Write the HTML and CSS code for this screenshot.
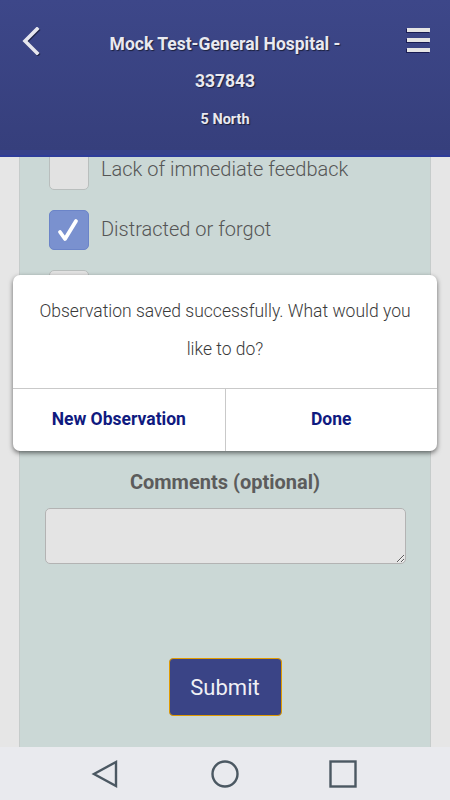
FILE: index.html
```html
<!DOCTYPE html>
<html>
<head>
<meta charset="utf-8">
<link rel="stylesheet" href="styles.css">
</head>
<body>
<div class="screen">
  <header class="topbar">
    <div class="topbar-main">
      <div class="back">
        <svg width="20" height="28" viewBox="0 0 20 28"><path d="M16 2 L4 14 L16 26" fill="none" stroke="#e6e6ee" stroke-width="3.6" stroke-linecap="square"/></svg>
      </div>
      <div class="titles">
        <div class="title">Mock Test-General Hospital -</div>
        <div class="title">337843</div>
        <div class="subtitle">5 North</div>
      </div>
      <div class="menu">
        <span class="bar"></span><span class="bar"></span><span class="bar"></span>
      </div>
    </div>
    <div class="topbar-band"></div>
  </header>

  <main class="content">
    <div class="panel">
      <div class="row first">
        <span class="box"></span>
        <span class="label">Lack of immediate feedback</span>
      </div>
      <div class="row">
        <span class="box checked">
          <svg width="26" height="26" viewBox="0 0 26 26"><path d="M5 15 L10 22 L21 4" fill="none" stroke="#fff" stroke-width="3.8" stroke-linecap="round" stroke-linejoin="round"/></svg>
        </span>
        <span class="label">Distracted or forgot</span>
      </div>
      <div class="row">
        <span class="box"></span>
        <span class="label">Other</span>
      </div>
      <div class="comments-label">Comments (optional)</div>
      <textarea class="comments"></textarea>
      <button class="submit">Submit</button>
    </div>
  </main>

  <nav class="navbar">
    <svg width="30" height="30" viewBox="0 0 30 30"><path d="M25 3 L3 15 L25 27 Z" fill="none" stroke="#4b5862" stroke-width="2.4" stroke-linejoin="miter"/></svg>
    <svg width="30" height="30" viewBox="0 0 30 30"><circle cx="15" cy="15" r="12.5" fill="none" stroke="#4b5862" stroke-width="2.4"/></svg>
    <svg width="30" height="30" viewBox="0 0 30 30"><rect x="2.5" y="2.5" width="25" height="25" fill="none" stroke="#4b5862" stroke-width="2.4"/></svg>
  </nav>

  <div class="dialog">
    <div class="dialog-msg">Observation saved successfully. What would you like to do?</div>
    <div class="dialog-actions">
      <div class="dialog-btn">New Observation</div>
      <div class="dialog-btn">Done</div>
    </div>
  </div>
</div>
</body>
</html>
```

FILE: styles.css
```css
* { box-sizing: border-box; }
html, body { margin: 0; padding: 0; }
body {
  font-family: Roboto, "Liberation Sans", sans-serif;
  background: #e6e6e6;
}
.screen {
  position: relative;
  width: 450px;
  height: 800px;
  display: flex;
  flex-direction: column;
  overflow: hidden;
  background: #e6e6e6;
}
.topbar {
  flex: 0 0 157px;
  display: flex;
  flex-direction: column;
}
.topbar-main {
  flex: 0 0 150px;
  background: linear-gradient(#3d4789, #363f7c);
  display: flex;
  align-items: flex-start;
  color: #e9e9f0;
}
.topbar-band {
  flex: 0 0 7px;
  background: #37418a;
  border-bottom: 2px solid #2e3c9a;
}
.back {
  width: 70px;
  padding: 27px 0 0 21px;
  filter: drop-shadow(1px 1px 0 rgba(0,0,0,0.45));
}
.back svg { display: block; }
.titles {
  flex: 1;
  text-align: center;
  padding-top: 26px;
  text-shadow: 1px 1px 1px rgba(0,0,0,0.55);
}
.title {
  font-size: 17.5px;
  font-weight: 700;
  line-height: 37px;
}
.subtitle {
  font-size: 14.5px;
  font-weight: 700;
  line-height: 20px;
  margin-top: 10px;
}
.menu {
  width: 70px;
  padding: 28px 20px 0 27px;
  display: flex;
  flex-direction: column;
  gap: 6px;
  align-items: flex-end;
}
.bar {
  display: block;
  width: 23px;
  height: 4px;
  background: #e4e4e4;
  box-shadow: -1px 1px 0 rgba(10,10,60,0.7);
}
.content {
  flex: 1;
  overflow: hidden;
  padding: 0 19px;
}
.panel {
  height: 100%;
  background: #cbd8d6;
  border-left: 1px solid #c6cccb;
  border-right: 1px solid #c6cccb;
  display: flex;
  flex-direction: column;
  align-items: stretch;
  padding: 0 25px 0 29px;
}
.row {
  display: flex;
  align-items: center;
  height: 40px;
  margin-bottom: 20px;
}
.row.first { margin-top: -7px; }
.box {
  width: 40px;
  height: 40px;
  border: 1px solid #b9bebd;
  border-radius: 5px;
  background: #e2e2e2;
  flex: 0 0 40px;
  display: flex;
  align-items: center;
  justify-content: center;
}
.box.checked {
  background: #7a91cf;
  border-color: #6b84c8;
}
.box svg { display: block; margin-left: -2px; }
.label {
  margin-left: 12px;
  font-size: 20px;
  font-weight: 300;
  color: #555;
  margin-top: -3px;
}
.comments-label {
  margin-top: 140px;
  text-align: center;
  font-size: 20px;
  font-weight: 700;
  color: #5c5c5c;
  line-height: 24px;
  margin-left: -4px;
}
.comments {
  margin: 14px 0 0 -4px;
  width: 361px;
  height: 56px;
  background: #e4e4e4;
  border: 1px solid #b3b3b3;
  border-radius: 5px;
  resize: vertical;
}
.submit {
  align-self: center;
  margin: 94px 0 0 -4px;
  width: 113px;
  height: 58px;
  background: #3a4486;
  border: 1px solid #e09a00;
  border-radius: 4px;
  color: #f0f0f5;
  font-family: Roboto, "Liberation Sans", sans-serif;
  font-size: 22px;
  font-weight: 400;
}
.navbar {
  flex: 0 0 53px;
  background: #e9eaee;
  display: flex;
  justify-content: space-between;
  align-items: center;
  padding: 0 92px 0 91px;
}
.navbar svg { display: block; }
.dialog {
  position: absolute;
  left: 13px;
  top: 275px;
  width: 424px;
  height: 176px;
  background: #fff;
  border-radius: 7px;
  box-shadow: 0 2px 5px rgba(0,0,0,0.55);
  display: flex;
  flex-direction: column;
}
.dialog-msg {
  flex: 0 0 113px;
  padding: 17px 16px 0;
  text-align: center;
  font-size: 17.5px;
  font-weight: 300;
  line-height: 38px;
  color: #3a3a3a;
}
.dialog-actions {
  flex: 1;
  display: flex;
  border-top: 1px solid #c9c9c9;
}
.dialog-btn {
  flex: 1;
  display: flex;
  align-items: center;
  justify-content: center;
  font-size: 17.5px;
  font-weight: 700;
  color: #0f1a80;
  padding-bottom: 2px;
}
.dialog-btn + .dialog-btn { border-left: 1px solid #c9c9c9; }
```
